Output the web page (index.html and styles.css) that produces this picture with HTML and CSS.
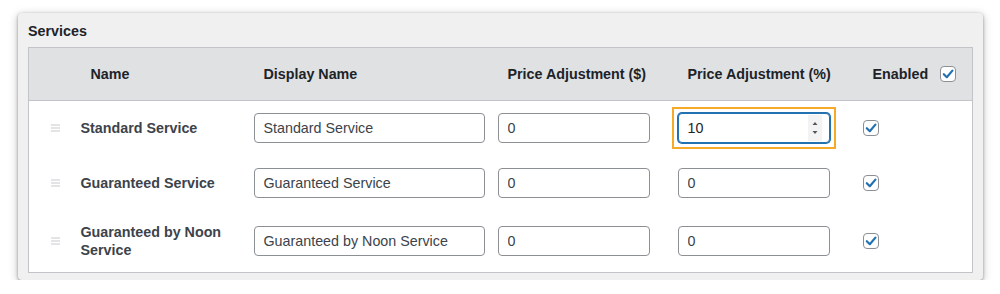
FILE: index.html
```html
<!DOCTYPE html>
<html lang="en">
<head>
<meta charset="utf-8">
<title>Services</title>
<link rel="stylesheet" href="styles.css">
</head>
<body>
<div class="card">
  <div class="title">Services</div>
  <table class="services">
    <colgroup>
      <col class="c-handle">
      <col class="c-name">
      <col class="c-display">
      <col class="c-dollar">
      <col class="c-percent">
      <col class="c-enabled">
    </colgroup>
    <thead>
      <tr>
        <th></th>
        <th>Name</th>
        <th>Display Name</th>
        <th>Price Adjustment ($)</th>
        <th>Price Adjustment (%)</th>
        <th><span class="enabled-head">Enabled <span class="check"><svg viewBox="0 0 16 16" width="16" height="16"><path d="M3.8 8.2 L6.8 11.2 L12.4 4.6" fill="none" stroke="#2271b1" stroke-width="2.2" stroke-linecap="round" stroke-linejoin="round"/></svg></span></span></th>
      </tr>
    </thead>
    <tbody>
      <tr>
        <td class="handle"><svg viewBox="0 0 9 8" width="9" height="8"><path d="M0 1h9M0 4h9M0 7h9" stroke="#c8c9cc" stroke-width="1.2"/></svg></td>
        <td class="name">Standard Service</td>
        <td><input class="field f-display" type="text" value="Standard Service"></td>
        <td><input class="field f-num" type="text" value="0"></td>
        <td>
          <div class="highlight">
            <div class="field f-num focused">
              <input class="bare" type="text" value="10">
              <span class="spin"><svg viewBox="0 0 8 20" width="8" height="20"><path d="M1.5 7 L4 4 L6.5 7 Z M1.5 13 L4 16 L6.5 13 Z" fill="#50575e"/></svg></span>
            </div>
          </div>
        </td>
        <td><span class="check"><svg viewBox="0 0 16 16" width="16" height="16"><path d="M3.8 8.2 L6.8 11.2 L12.4 4.6" fill="none" stroke="#2271b1" stroke-width="2.2" stroke-linecap="round" stroke-linejoin="round"/></svg></span></td>
      </tr>
      <tr>
        <td class="handle"><svg viewBox="0 0 9 8" width="9" height="8"><path d="M0 1h9M0 4h9M0 7h9" stroke="#c8c9cc" stroke-width="1.2"/></svg></td>
        <td class="name">Guaranteed Service</td>
        <td><input class="field f-display" type="text" value="Guaranteed Service"></td>
        <td><input class="field f-num" type="text" value="0"></td>
        <td><input class="field f-num" type="text" value="0"></td>
        <td><span class="check"><svg viewBox="0 0 16 16" width="16" height="16"><path d="M3.8 8.2 L6.8 11.2 L12.4 4.6" fill="none" stroke="#2271b1" stroke-width="2.2" stroke-linecap="round" stroke-linejoin="round"/></svg></span></td>
      </tr>
      <tr>
        <td class="handle"><svg viewBox="0 0 9 8" width="9" height="8"><path d="M0 1h9M0 4h9M0 7h9" stroke="#c8c9cc" stroke-width="1.2"/></svg></td>
        <td class="name">Guaranteed by Noon Service</td>
        <td><input class="field f-display" type="text" value="Guaranteed by Noon Service"></td>
        <td><input class="field f-num" type="text" value="0"></td>
        <td><input class="field f-num" type="text" value="0"></td>
        <td><span class="check"><svg viewBox="0 0 16 16" width="16" height="16"><path d="M3.8 8.2 L6.8 11.2 L12.4 4.6" fill="none" stroke="#2271b1" stroke-width="2.2" stroke-linecap="round" stroke-linejoin="round"/></svg></span></td>
      </tr>
    </tbody>
  </table>
</div>
</body>
</html>
```
FILE: styles.css
```css
* { box-sizing: border-box; }

html, body {
  margin: 0;
  padding: 0;
  background: #ffffff;
}

body {
  font-family: "Liberation Sans", Arial, sans-serif;
  font-size: 14px;
  color: #1d2327;
}

.card {
  margin: 13px 17px 0 18px;
  height: 267px;
  background: #f0f0f1;
  border-radius: 4px;
  padding: 9px 10px 8px 10px;
  box-shadow: 0 1px 3px rgba(0, 0, 0, 0.35), 0 2px 10px rgba(0, 0, 0, 0.25);
}

.title {
  font-weight: 700;
  font-size: 14.3px;
  line-height: 18px;
  color: #1d2327;
  margin-bottom: 7px;
}

.services {
  width: 100%;
  table-layout: fixed;
  border-collapse: collapse;
  border: 1px solid #c3c4c7;
  background: #ffffff;
}

.c-handle { width: 42px; }
.c-name { width: 173px; }
.c-display { width: 244px; }
.c-dollar { width: 180px; }
.c-percent { width: 185px; }
.c-enabled { width: auto; }

.services thead tr {
  background: #dfe1e3;
  border-bottom: 1px solid #c3c4c7;
}

.services th {
  height: 53px;
  padding: 0 10px 0 20px;
  text-align: left;
  font-weight: 700;
  font-size: 14.3px;
  color: #1d2327;
  vertical-align: middle;
  white-space: nowrap;
}

.enabled-head {
  display: inline-flex;
  align-items: center;
  gap: 12px;
}

.services td {
  padding: 12px 10px 13px 10px;
  vertical-align: middle;
}

.services td.handle {
  padding: 12px 0 13px 22px;
}

.handle svg { display: block; }

.name {
  font-weight: 700;
  font-size: 14.3px;
  color: #3c434a;
  line-height: 18px;
}

.field {
  display: block;
  height: 30px;
  border: 1px solid #8c8f94;
  border-radius: 4px;
  background: #ffffff;
  font-family: "Liberation Sans", Arial, sans-serif;
  font-size: 14.3px;
  color: #3c434a;
  padding: 0 9px;
  margin: 0;
  outline: none;
}

.f-display { width: 231px; }
.f-num { width: 152px; }

.highlight {
  width: 164px;
  margin: -6px;
  padding: 4px;
  border: 2px solid #f7a928;
}

.focused {
  display: flex;
  align-items: center;
  border-color: #2271b1;
  box-shadow: 0 0 0 1px #2271b1;
  padding-right: 7px;
}

.bare {
  flex: 1;
  min-width: 0;
  border: 0;
  outline: none;
  padding: 0;
  background: transparent;
  font-family: "Liberation Sans", Arial, sans-serif;
  font-size: 14.3px;
  color: #1d2327;
}

.spin {
  display: flex;
  align-items: center;
  justify-content: center;
  width: 14px;
  height: 26px;
  background: #f3f3f4;
}

.spin svg { display: block; }

.check {
  display: inline-block;
  width: 16px;
  height: 16px;
  border: 1px solid #8c8f94;
  border-radius: 4px;
  background: #ffffff;
  vertical-align: middle;
  position: relative;
}

.check svg {
  position: absolute;
  left: -1px;
  top: -1px;
}

td .check { display: block; }
```
